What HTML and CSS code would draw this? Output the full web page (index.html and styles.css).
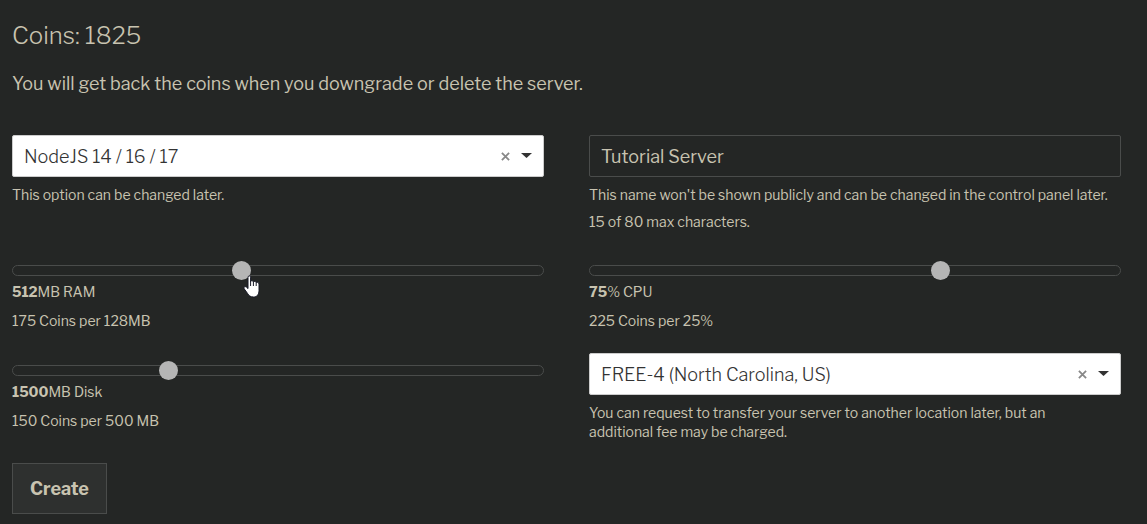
FILE: index.html
```html
<!DOCTYPE html>
<html lang="en">
<head>
<meta charset="utf-8">
<meta name="viewport" content="width=device-width, initial-scale=1">
<title>Create server</title>
<link rel="stylesheet" href="styles.css">
</head>
<body>
<main class="page">
  <h1 class="coins">Coins: 1825</h1>
  <p class="intro">You will get back the coins when you downgrade or delete the server.</p>
  <form class="form">
    <div class="grid">
      <div class="field">
        <div class="picker">
          <select class="control picker-select" aria-label="Server type" aria-describedby="type-help">
            <option>NodeJS 14 / 16 / 17</option>
          </select>
          <button class="clear" type="button" aria-label="Clear server type"><svg class="clear-icon" viewBox="0 0 10 10"><path d="M1 1l8 8M9 1l-8 8"/></svg></button>
          <svg class="caret" viewBox="0 0 11 5" aria-hidden="true"><path d="M0 0h11L5.500 5z"/></svg>
        </div>
        <p class="help" id="type-help">This option can be changed later.</p>
      </div>
      <div class="field">
        <input class="control name" type="text" value="Tutorial Server" maxlength="80" aria-label="Server name" aria-describedby="name-help">
        <p class="help" id="name-help">This name won't be shown publicly and can be changed in the control panel later.</p>
        <p class="help counter">15 of 80 max characters.</p>
      </div>
      <div class="field slider-field">
        <div class="slider-box">
          <input class="slider" id="ram" type="range" min="128" max="1024" step="128" value="512">
          <svg class="pointer" viewBox="0 0 17 23" aria-hidden="true"><path d="M5 2.200C5 .4 7.600.4 7.600 2.200V6.500C8 5.200 10.400 5.400 10.400 7C10.900 5.900 13.200 6.100 13.200 7.800C13.800 6.900 16 7.200 16 9V15.500C16 19.500 14 22 10.500 22C7.500 22 5.800 20.700 4.600 18.500L1.200 13.800C.2 12.200 1.900 10.900 3.400 12.100L5 13.600z"/><path class="pointer-lines" d="M7.600 6v5M10.400 7v4M13.200 8v3"/></svg>
        </div>
        <label class="amount" for="ram"><strong>512</strong>MB RAM</label>
        <p class="price">175 Coins per 128MB</p>
      </div>
      <div class="field slider-field">
        <div class="slider-box">
          <input class="slider" id="cpu" type="range" min="25" max="100" step="25" value="75">
        </div>
        <label class="amount" for="cpu"><strong>75</strong>% CPU</label>
        <p class="price">225 Coins per 25%</p>
      </div>
      <div class="field slider-field">
        <div class="slider-box">
          <input class="slider" id="disk" type="range" min="500" max="4000" step="500" value="1500">
        </div>
        <label class="amount" for="disk"><strong>1500</strong>MB Disk</label>
        <p class="price">150 Coins per 500 MB</p>
      </div>
      <div class="field">
        <div class="picker">
          <select class="control picker-select" aria-label="Location" aria-describedby="location-help">
            <option>FREE-4 (North Carolina, US)</option>
          </select>
          <button class="clear" type="button" aria-label="Clear location"><svg class="clear-icon" viewBox="0 0 10 10"><path d="M1 1l8 8M9 1l-8 8"/></svg></button>
          <svg class="caret" viewBox="0 0 11 5" aria-hidden="true"><path d="M0 0h11L5.500 5z"/></svg>
        </div>
        <p class="help location-help" id="location-help">You can request to transfer your server to another location later, but an additional fee may be charged.</p>
      </div>
    </div>
    <button class="create" type="submit">Create</button>
  </form>
</main>
</body>
</html>
```
FILE: styles.css
```css
* {
  box-sizing: border-box;
}

body {
  margin: 0;
  background: #242625;
  color: #c8c3b0;
  font-family: "Libre Franklin", Inter, "Liberation Sans", sans-serif;
  font-size: 14px;
}

h1, p {
  margin: 0;
}

.page {
  padding: 21px 26px 10px 12px;
}

.coins {
  font-size: 24px;
  font-weight: 300;
  line-height: 30px;
}

.intro {
  margin-top: 20px;
  font-size: 18px;
  line-height: 26px;
}

.form {
  margin-top: 38px;
}

.grid {
  display: grid;
  grid-template-columns: 1fr 1fr;
  column-gap: 45px;
  row-gap: 22px;
}

.control {
  display: block;
  width: 100%;
  height: 42px;
  padding: 0 11px;
  border: 1px solid #4a4c4b;
  border-radius: 2px;
  font-family: inherit;
  font-size: 18px;
}

.name {
  background: transparent;
  color: #c8c3b0;
}

.picker {
  position: relative;
}

.picker-select {
  appearance: none;
  border-color: #ccc;
  background: #fff;
  color: #333;
  font-weight: 300;
}

.clear {
  position: absolute;
  top: 13px;
  right: 31px;
  display: flex;
  padding: 3px;
  border: 0;
  background: none;
}

.clear-icon {
  width: 9px;
  height: 9px;
  margin-top: 1px;
  fill: none;
  stroke: #888;
  stroke-width: 2;
}

.caret {
  position: absolute;
  top: 18px;
  right: 12px;
  width: 11px;
  height: 5px;
  fill: #333;
  pointer-events: none;
}

.help {
  margin-top: 8px;
  line-height: 19px;
}

.location-help {
  padding-right: 24px;
}

.counter {
  margin-top: 8px;
}

.slider-field {
  padding-top: 8px;
}

.slider-box {
  position: relative;
  display: flex;
  height: 19px;
}

.slider {
  appearance: none;
  flex: 1;
  height: 19px;
  margin: 0;
  background: none;
}

.slider::-webkit-slider-runnable-track {
  height: 11px;
  border: 1px solid #4a4c4b;
  border-radius: 6px;
}

.slider::-webkit-slider-thumb {
  appearance: none;
  width: 19px;
  height: 19px;
  margin-top: -5px;
  border-radius: 50%;
  background: #b5b5b5;
}

.pointer {
  position: absolute;
  top: 14px;
  left: 231px;
  width: 17px;
  height: 23px;
  fill: #fff;
  stroke: #161826;
  stroke-width: 1;
}

.pointer-lines {
  fill: none;
}

.amount {
  display: block;
  margin-top: 2px;
  line-height: 20px;
}

.price {
  margin-top: 9px;
  line-height: 20px;
}

.create {
  margin-top: 22px;
  padding: 12px 17px;
  border: 1px solid #4a4c4b;
  background: #2e302f;
  color: #c8c3b0;
  font-family: inherit;
  font-size: 18px;
  font-weight: 700;
  line-height: 25px;
}
```
